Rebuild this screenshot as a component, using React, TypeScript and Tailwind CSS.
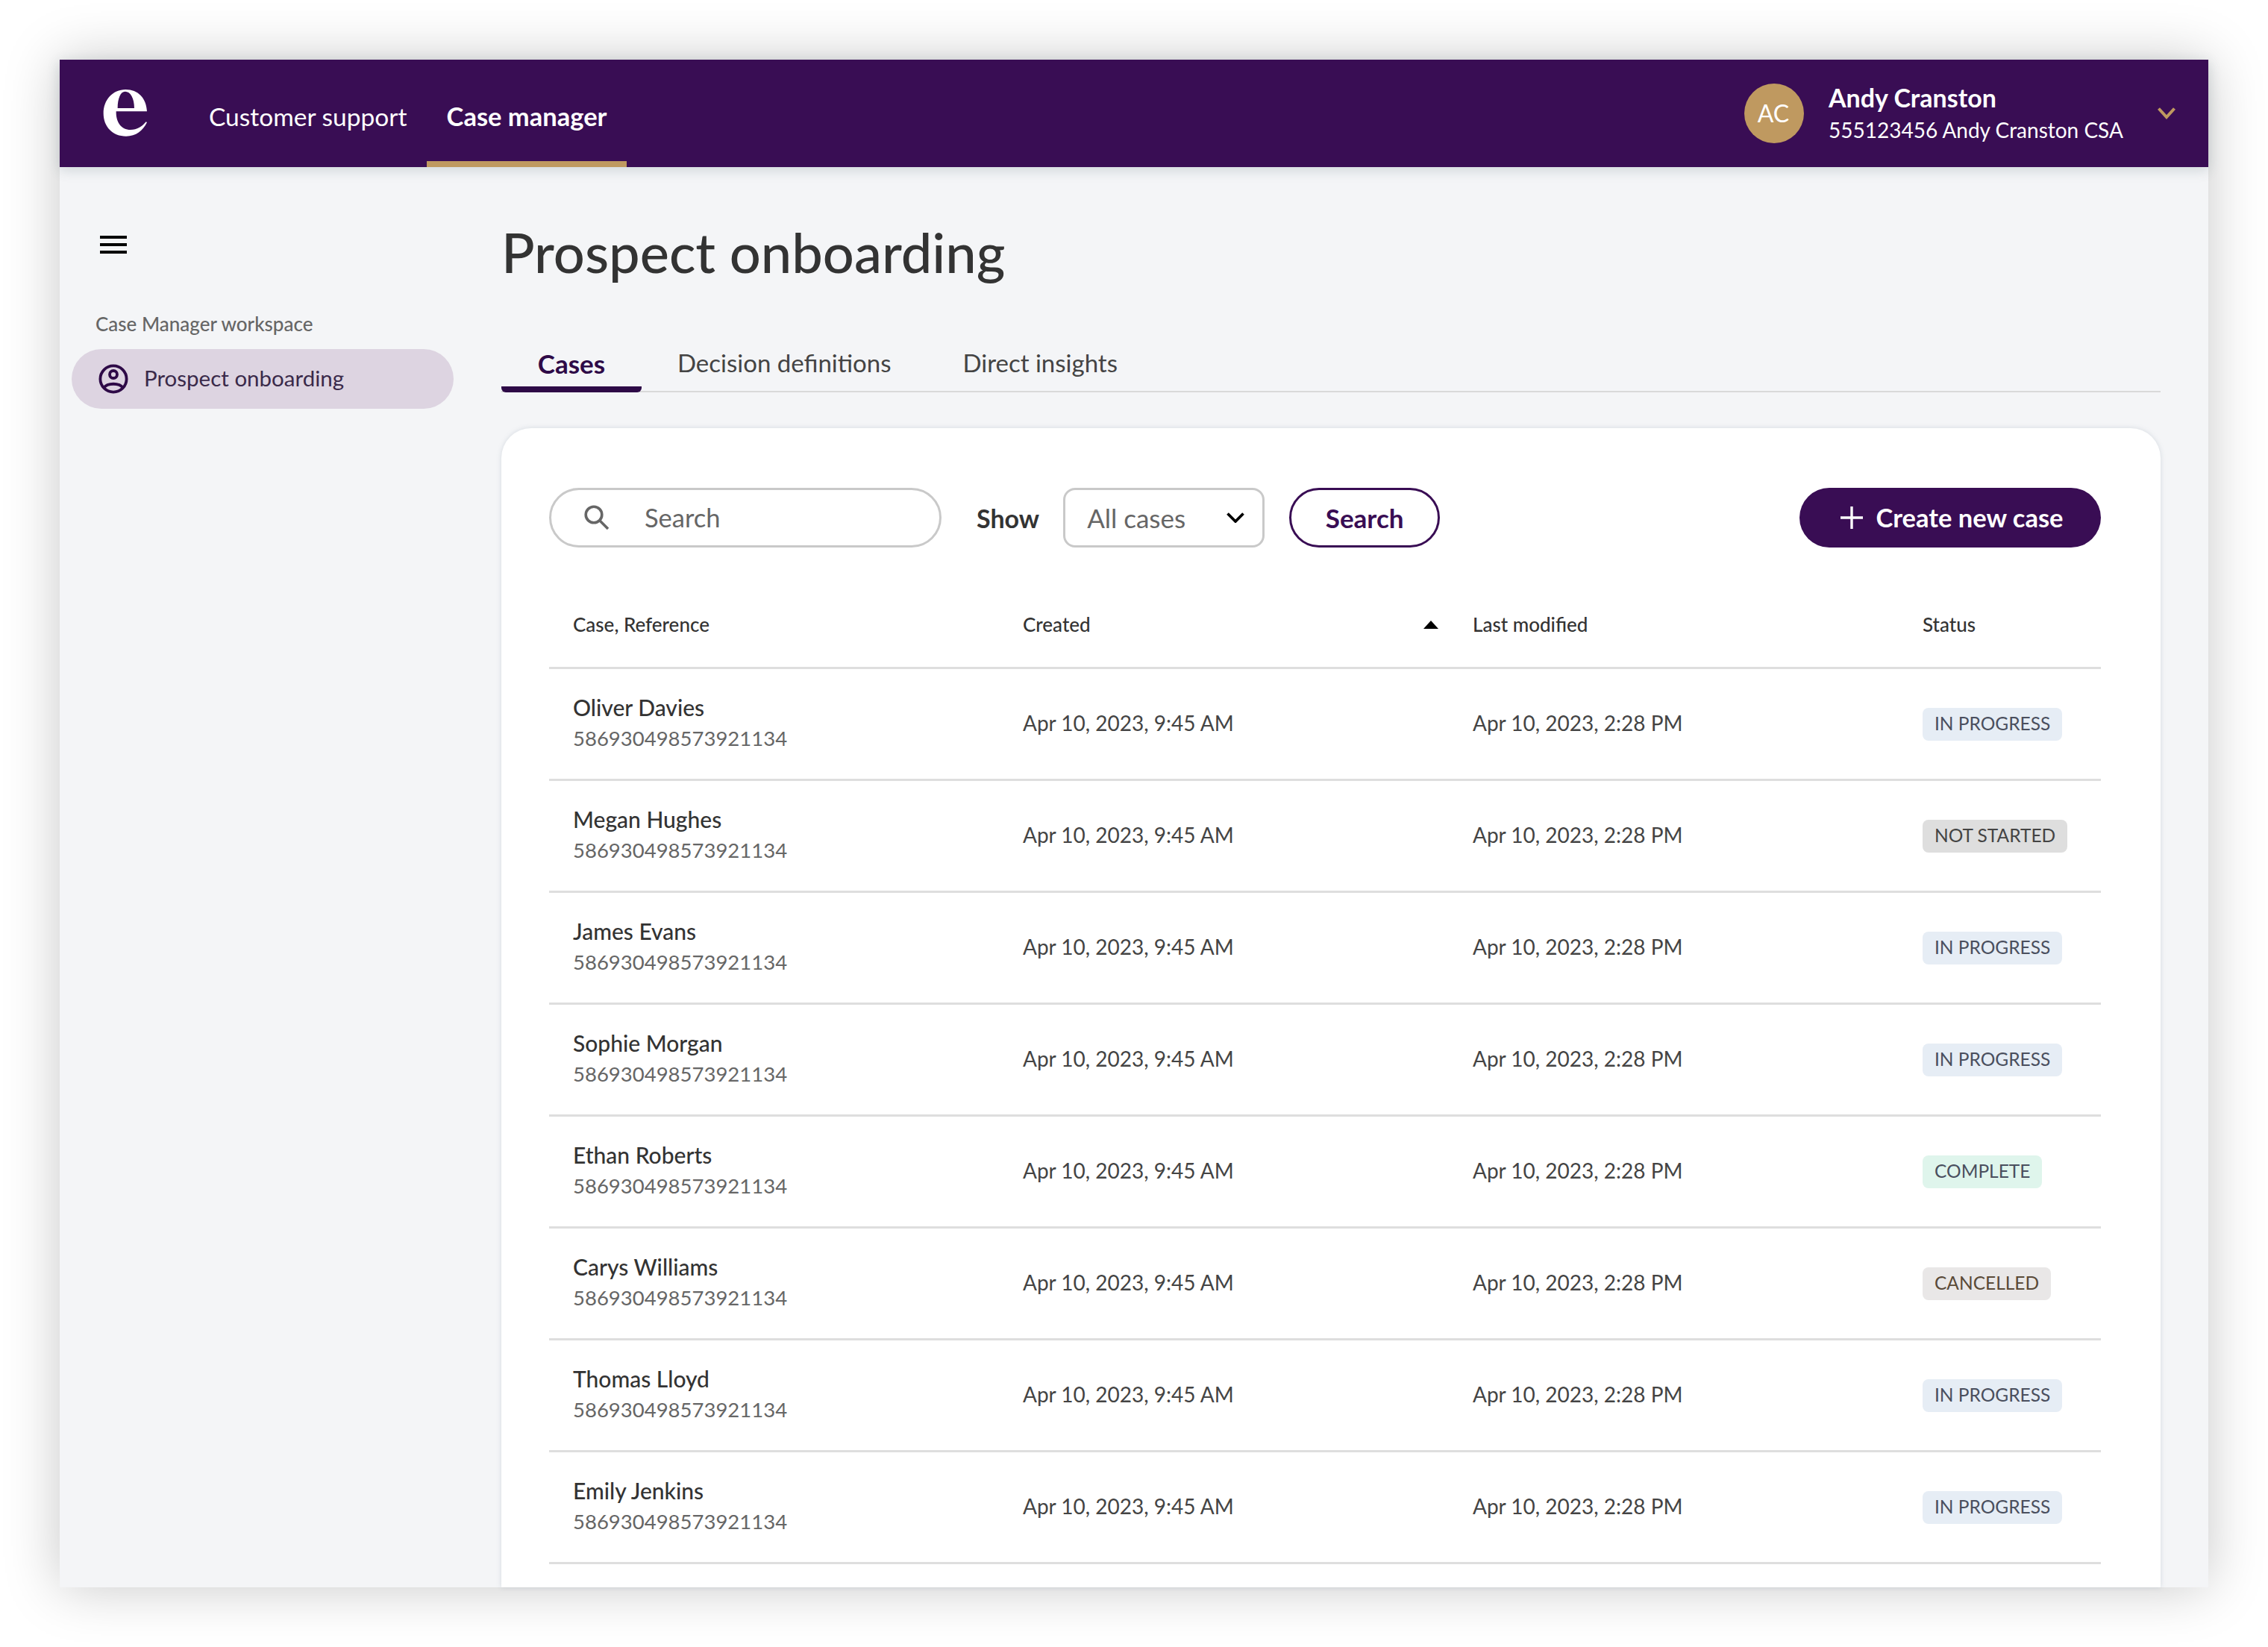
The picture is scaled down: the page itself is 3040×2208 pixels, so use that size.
import React from "react";

type Status = "IN PROGRESS" | "NOT STARTED" | "COMPLETE" | "CANCELLED";

const rows: { name: string; status: Status }[] = [
  { name: "Oliver Davies", status: "IN PROGRESS" },
  { name: "Megan Hughes", status: "NOT STARTED" },
  { name: "James Evans", status: "IN PROGRESS" },
  { name: "Sophie Morgan", status: "IN PROGRESS" },
  { name: "Ethan Roberts", status: "COMPLETE" },
  { name: "Carys Williams", status: "CANCELLED" },
  { name: "Thomas Lloyd", status: "IN PROGRESS" },
  { name: "Emily Jenkins", status: "IN PROGRESS" },
];

const badgeClass: Record<Status, string> = {
  "IN PROGRESS": "bg-[#e6edf5] text-[#4a4f5e]",
  "NOT STARTED": "bg-[#dedede] text-[#444444]",
  COMPLETE: "bg-[#dff5ec] text-[#4a4f5e]",
  CANCELLED: "bg-[#e9e7e7] text-[#5a4a38]",
};

function Logo() {
  return (
    <svg viewBox="0 0 270 270" className="w-[90px] h-[90px]" fill="#ffffff" fillRule="evenodd">
      <path d="M216 118C214 65 180 30 130 30C78 30 41 72 41 126C41 180 78 218 132 218C172 218 200 195 216 162L212 160C196 180 176 192 150 192C112 192 92 160 92 122L92 118ZM98 105C98 65 110 38 128 38C150 38 165 65 165 105Z" />
    </svg>
  );
}

function PersonIcon() {
  return (
    <svg viewBox="0 0 40 40" className="w-10 h-10" fill="none" stroke="#2e0a47" strokeWidth="3.8">
      <circle cx="20" cy="20" r="17.6" />
      <circle cx="20" cy="14" r="5" />
      <path d="M7 32C12 25 28 25 33 32" />
    </svg>
  );
}

function Tab({ label, active }: { label: string; active?: boolean }) {
  return (
    <div
      className={
        active
          ? "w-[188px] h-[70px] flex items-center justify-center border-b-[8px] border-[#2e0a47] rounded-b-md text-[35px] font-bold text-[#2e0a47]"
          : "h-[70px] px-12 flex items-center justify-center pb-2 text-[33px] text-[#444444]"
      }
    >
      {label}
    </div>
  );
}

export default function App() {
  return (
    <div className="w-[3040px] h-[2208px] bg-white p-20 overflow-hidden font-['Lato',sans-serif] text-[#333333]">
      <div className="h-[2048px] bg-[#f4f5f7] flex flex-col shadow-[0_0_70px_rgba(0,0,0,0.22)]">
        <header className="relative z-10 h-36 shrink-0 bg-[#390d54] flex items-center text-white shadow-[0_4px_16px_rgba(60,90,100,0.2)]">
          <div className="ml-[45px] w-[90px] mt-[6px]">
            <Logo />
          </div>
          <nav className="ml-[57px] flex h-full items-stretch text-[34px]">
            <div className="w-[300px] flex items-center pt-[9px] pl-[8px] text-[33.5px]">Customer support</div>
            <div className="w-[268px] flex items-center justify-center pt-[15px] border-b-[8px] border-[#bf9960] text-[34.5px] font-bold">
              Case manager
            </div>
          </nav>
          <div className="ml-auto flex items-center">
            <div className="w-20 h-20 rounded-full bg-[#bf9960] flex items-center justify-center pr-[2px] text-[32px]">AC</div>
            <div className="ml-[33px] w-[441px] flex flex-col">
              <div className="text-[34px] leading-[42px] font-bold">Andy Cranston</div>
              <div className="mt-[1px] text-[28px] leading-[42px]">555123456 Andy Cranston CSA</div>
            </div>
            <svg viewBox="0 0 24 16" className="w-6 h-4 mr-[44px]" fill="none" stroke="#bf9960" strokeWidth="4">
              <path d="M1.5 1.5L12 13L22.5 1.5" />
            </svg>
          </div>
        </header>

        <div className="flex flex-1 min-h-0">
          <aside className="w-[592px] shrink-0 pl-4 pt-[92px]">
            <div className="ml-[38px] w-9 h-6 flex flex-col justify-between">
              <span className="h-1 bg-black" />
              <span className="h-1 bg-black" />
              <span className="h-1 bg-black" />
            </div>
            <div className="ml-8 mt-[78px] text-[26px] leading-8 font-medium text-[#666666]">Case Manager workspace</div>
            <div className="mt-[18px] w-[512px] h-20 rounded-full bg-[#ddd4e1] flex items-center pl-9 gap-[21px] text-[29.5px] text-[#3a2a4a]">
              <PersonIcon />
              <span className="pb-[2px]">Prospect onboarding</span>
            </div>
          </aside>

          <main className="w-[2224px] flex flex-col min-h-0">
            <h1 className="mt-[69px] text-[74px] leading-[90px] font-medium text-[#333333]">Prospect onboarding</h1>
            <div className="mt-[73px] h-[70px] flex items-start border-b-[2px] border-[#d9d9d9]">
              <Tab label="Cases" active />
              <Tab label="Decision definitions" />
              <Tab label="Direct insights" />
            </div>
            <section className="mt-[48px] flex-1 min-h-0 overflow-hidden bg-white rounded-t-[40px] pl-16 pr-20 pt-20 shadow-[0_0_6px_rgba(120,140,160,0.25)]">
              <div className="flex items-center h-20">
                <div className="w-[526px] h-20 rounded-full border-[3px] border-[#c9c9c9] flex items-center pl-11 gap-[47px]">
                  <svg viewBox="0 0 34 34" className="w-[34px] h-[34px]" fill="none" stroke="#666666" strokeWidth="3.6">
                    <circle cx="13" cy="13" r="10.8" />
                    <path d="M21 21L32 32" />
                  </svg>
                  <span className="text-[34.5px] text-[#666666]">Search</span>
                </div>
                <span className="ml-[47px] text-[34px] font-bold text-[#333333]">Show</span>
                <div className="ml-[32px] w-[270px] h-20 rounded-2xl border-[3px] border-[#c9c9c9] flex items-center pl-[29px] text-[35px] text-[#666666]">
                  <span>All cases</span>
                  <svg viewBox="0 0 24 14" className="ml-auto mr-6 w-6 h-[14px]" fill="none" stroke="#000000" strokeWidth="3.8">
                    <path d="M1.5 1.5L12 12L22.5 1.5" />
                  </svg>
                </div>
                <div className="ml-[33px] w-[202px] h-20 rounded-full border-[3px] border-[#390d54] flex items-center justify-center text-[35px] font-bold text-[#390d54]">
                  Search
                </div>
                <div className="ml-auto w-[404px] h-20 rounded-full bg-[#390d54] flex items-center justify-center gap-[17px] pl-[5px] text-[34.5px] font-bold text-white">
                  <svg viewBox="0 0 30 30" className="w-[30px] h-[30px]" stroke="#ffffff" strokeWidth="3.4">
                    <path d="M15 0V30M0 15H30" />
                  </svg>
                  Create new case
                </div>
              </div>

              <div className="mt-[45px] h-[118px] pt-[1px] grid grid-cols-[603px_603px_603px_271px] items-center border-b-[3px] border-[#dedede] text-[26px] font-medium text-[#333333]">
                <div className="pl-8">Case, Reference</div>
                <div className="pl-8 pr-[14px] flex items-center justify-between">
                  <span>Created</span>
                  <span className="w-0 h-0 border-x-[10px] border-x-transparent border-b-[11px] border-b-black" />
                </div>
                <div className="pl-8">Last modified</div>
                <div className="pl-8">Status</div>
              </div>

              {rows.map((r) => (
                <div
                  key={r.name}
                  className="h-[150px] grid grid-cols-[603px_603px_603px_271px] items-center border-b-[3px] border-[#dedede]"
                >
                  <div className="pl-8 pb-[4px]">
                    <div className="text-[30px] leading-[42px] font-medium text-[#333333]">{r.name}</div>
                    <div className="text-[27.5px] leading-[42px] text-[#666666]">586930498573921134</div>
                  </div>
                  <div className="pl-8 pb-[3px] text-[28px] text-[#444444]">Apr 10, 2023, 9:45 AM</div>
                  <div className="pl-8 pb-[3px] text-[28px] text-[#444444]">Apr 10, 2023, 2:28 PM</div>
                  <div className="pl-8">
                    <span className={"inline-flex items-center h-11 px-4 rounded-lg text-[24.5px] " + badgeClass[r.status]}>
                      {r.status}
                    </span>
                  </div>
                </div>
              ))}
            </section>
          </main>
        </div>
      </div>
    </div>
  );
}
